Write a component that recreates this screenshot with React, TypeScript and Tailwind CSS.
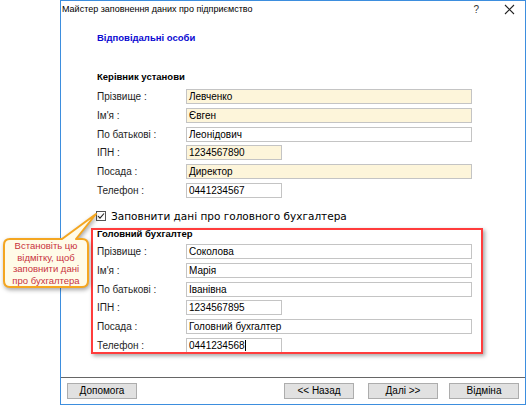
import React from "react";

type Row = { label: string; value: string; cream?: boolean; short?: boolean; mt: string; caret?: boolean };

const top: Row[] = [
  { label: "Прізвище :", value: "Левченко", cream: true, mt: "mt-[6px]" },
  { label: "Ім'я :", value: "Євген", cream: true, mt: "mt-[4px]" },
  { label: "По батькові :", value: "Леонідович", mt: "mt-[4px]" },
  { label: "ІПН :", value: "1234567890", cream: true, short: true, mt: "mt-[3px]" },
  { label: "Посада :", value: "Директор", cream: true, mt: "mt-[4px]" },
  { label: "Телефон :", value: "0441234567", short: true, mt: "mt-[4px]" },
];

const bottom: Row[] = [
  { label: "Прізвище :", value: "Соколова", mt: "mt-[4px]" },
  { label: "Ім'я :", value: "Марія", mt: "mt-[4px]" },
  { label: "По батькові :", value: "Іванівна", mt: "mt-[4px]" },
  { label: "ІПН :", value: "1234567895", short: true, mt: "mt-[3px]" },
  { label: "Посада :", value: "Головний бухгалтер", mt: "mt-[4px]" },
  { label: "Телефон :", value: "0441234568", short: true, mt: "mt-[4px]", caret: true },
];

function FieldRow({ r }: { r: Row }) {
  return (
    <div className={`flex items-center h-[15px] ${r.mt}`}>
      <div className="w-[89px] shrink-0 text-[10px] leading-[12px] text-[#1e1e1e]">{r.label}</div>
      <div
        className={`h-[15px] ${r.short ? "w-[96px]" : "w-[286px]"} ${
          r.cream ? "bg-[#fdf5da]" : "bg-white"
        } border border-[#c4c4c4] flex items-center pl-[2px] text-[10px] leading-[12px] text-black`}
      >
        <span>{r.value}</span>
        {r.caret && <span className="inline-block w-px h-[11px] bg-black" />}
      </div>
    </div>
  );
}

function Button({ children }: { children: React.ReactNode }) {
  return (
    <div className="w-[70px] h-[16px] bg-[#e1e1e1] border border-[#adadad] flex items-center justify-center text-[10px] leading-[12px] text-black">
      {children}
    </div>
  );
}

export default function App() {
  return (
    <div
      className="relative w-[526px] h-[405px] bg-white overflow-hidden"
      style={{ fontFamily: '"Liberation Sans", Arial, sans-serif' }}
    >
      <div className="ml-[60px] w-[466px] h-[405px] border border-[#3d8ede] flex flex-col">
        {/* title bar */}
        <div className="h-[17px] flex items-center pl-[1px] text-[9px] leading-[11px] text-black">
          <span>Майстер заповнення даних про підприємство</span>
          <span className="ml-auto text-[10px] leading-[11px] text-[#333]">?</span>
          <svg width="11" height="11" viewBox="0 0 11 11" className="shrink-0 ml-[25px] mr-[10px]">
            <path d="M1 1 L10 10 M10 1 L1 10" stroke="#222" strokeWidth="1.1" />
          </svg>
        </div>

        {/* content */}
        <div className="flex-1 flex flex-col pl-[36px]">
          <div className="mt-[14px] h-[12px] text-[9.5px] leading-[12px] font-bold text-[#0a0ad2]">
            Відповідальні особи
          </div>
          <div className="mt-[27px] h-[12px] text-[9.5px] leading-[12px] font-bold text-black">
            Керівник установи
          </div>
          {top.map((r, i) => (
            <FieldRow key={i} r={r} />
          ))}

          <div className="mt-[12px] h-[12px] flex items-center -ml-[1px]">
            <div className="w-[10px] h-[10px] border border-[#555] bg-white flex items-center justify-center">
              <svg width="8" height="8" viewBox="0 0 8 8">
                <path d="M1 4 L3 6.2 L7 1.5" stroke="#222" strokeWidth="1.1" fill="none" />
              </svg>
            </div>
            <span
              className="ml-[5px] text-[10.5px] leading-[12px] text-black"
              style={{ fontFamily: '"DejaVu Sans", Verdana, sans-serif' }}
            >
              Заповнити дані про головного бухгалтера
            </span>
          </div>

          <div className="relative">
            <div className="mt-[6px] h-[12px] text-[9.5px] leading-[12px] font-bold text-black">
              Головний бухгалтер
            </div>
            {bottom.map((r, i) => (
              <FieldRow key={i} r={r} />
            ))}
            {/* red highlight annotation */}
            <div className="absolute left-[-6px] top-[6px] w-[392px] h-[126px] border-2 border-[#ff3c3c] shadow-[2px_2px_4px_rgba(0,0,0,0.35)] pointer-events-none" />
          </div>
        </div>

        {/* bottom bar */}
        <div className="h-[27px] border-t border-[#666] flex items-start pt-[5px] pl-[6px] pr-[6px]">
          <Button>Допомога</Button>
          <div className="ml-auto flex">
            <Button>&lt;&lt; Назад</Button>
            <div className="ml-[14px]">
              <Button>Далі &gt;&gt;</Button>
            </div>
            <div className="ml-[11px]">
              <Button>Відміна</Button>
            </div>
          </div>
        </div>
      </div>

      {/* callout annotation */}
      <svg
        className="absolute left-0 top-[205px]"
        width="110"
        height="92"
        viewBox="0 0 110 92"
        style={{ filter: "drop-shadow(1px 2px 2px rgba(0,0,0,0.35))" }}
      >
        <path
          d="M10 34 L62 34 L96 9 L76 34 L82 34 Q88 34 88 40 L88 76 Q88 82 82 82 L10 82 Q4 82 4 76 L4 40 Q4 34 10 34 Z"
          fill="#fffbe8"
          stroke="#f4a621"
          strokeWidth="2"
          strokeLinejoin="round"
        />
      </svg>
      <div className="absolute left-[4px] top-[239px] w-[84px] h-[48px] flex items-center justify-center text-center text-[9.5px] leading-[11.5px] text-[#c8323c]">
        <div>
          Встановіть цю
          <br />
          відмітку, щоб
          <br />
          заповнити дані
          <br />
          про бухгалтера
        </div>
      </div>
    </div>
  );
}
